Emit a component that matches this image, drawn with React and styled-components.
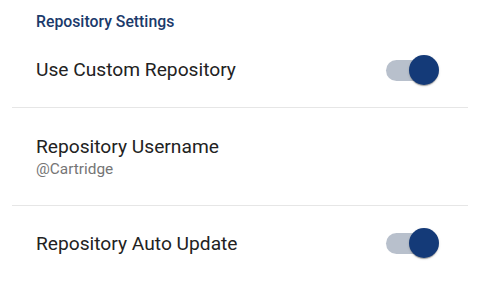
import React, { useState } from 'react';
import styled, { createGlobalStyle } from 'styled-components';

let GlobalStyle = createGlobalStyle`
  html, body {
    margin: 0;
    padding: 0;
    background: #ffffff;
  }
  body {
    font-family: Roboto, "Noto Sans", sans-serif;
    -webkit-font-smoothing: antialiased;
  }
`;

let Page = styled.div`
  width: 479px;
  height: 303px;
  background: #ffffff;
  padding-top: 10px;
  box-sizing: border-box;
`;

let SectionTitle = styled.h2`
  margin: 0;
  padding: 0 36px;
  height: 22px;
  display: flex;
  align-items: center;
  font-size: 15.8px;
  font-weight: 500;
  color: #1b3a6b;
`;

let List = styled.div`
  display: flex;
  flex-direction: column;
`;

let Row = styled.div`
  display: flex;
  align-items: center;
  justify-content: space-between;
  height: ${(props) => props.height}px;
  padding: 0 40px 0 36px;
  box-sizing: border-box;
`;

let Divider = styled.div`
  height: 1px;
  background: #e6e6e6;
  margin: 0 11px 0 12px;
`;

let Texts = styled.div`
  display: flex;
  flex-direction: column;
  gap: 2px;
`;

let Label = styled.span`
  font-size: 19.2px;
  color: #222222;
  line-height: 23px;
`;

let Sub = styled.span`
  font-size: 15.4px;
  color: #757575;
  line-height: 19px;
`;

let Switch = {};
Switch.Root = styled.button`
  position: relative;
  width: 53px;
  height: 30px;
  padding: 0;
  border: none;
  background: transparent;
  cursor: pointer;
`;

Switch.Track = styled.span`
  position: absolute;
  left: 0;
  top: 5px;
  width: 51px;
  height: 21px;
  border-radius: 11px;
  background: ${(props) => (props.on ? '#b8c0cc' : '#c4c4c4')};
`;

Switch.Thumb = styled.span`
  position: absolute;
  top: 0;
  left: ${(props) => (props.on ? '23px' : '0')};
  width: 30px;
  height: 30px;
  border-radius: 50%;
  background: ${(props) => (props.on ? '#143a78' : '#fafafa')};
  box-shadow: 0 2px 1px -1px rgba(0, 0, 0, 0.2), 0 1px 1px rgba(0, 0, 0, 0.14),
    0 1px 3px rgba(0, 0, 0, 0.12);
  transition: left 0.15s;
`;

function Toggle(props) {
  let [on, setOn] = useState(props.defaultOn);
  return (
    <Switch.Root onClick={() => setOn(!on)} aria-pressed={on}>
      <Switch.Track on={on ? 1 : 0} />
      <Switch.Thumb on={on ? 1 : 0} />
    </Switch.Root>
  );
}

function App() {
  return (
    <Page>
      <GlobalStyle />
      <SectionTitle>Repository Settings</SectionTitle>
      <List>
        <Row height={75}>
          <Label>Use Custom Repository</Label>
          <Toggle defaultOn />
        </Row>
        <Divider />
        <Row height={97}>
          <Texts>
            <Label>Repository Username</Label>
            <Sub>@Cartridge</Sub>
          </Texts>
        </Row>
        <Divider />
        <Row height={74}>
          <Label>Repository Auto Update</Label>
          <Toggle defaultOn />
        </Row>
      </List>
    </Page>
  );
}

export default App;
